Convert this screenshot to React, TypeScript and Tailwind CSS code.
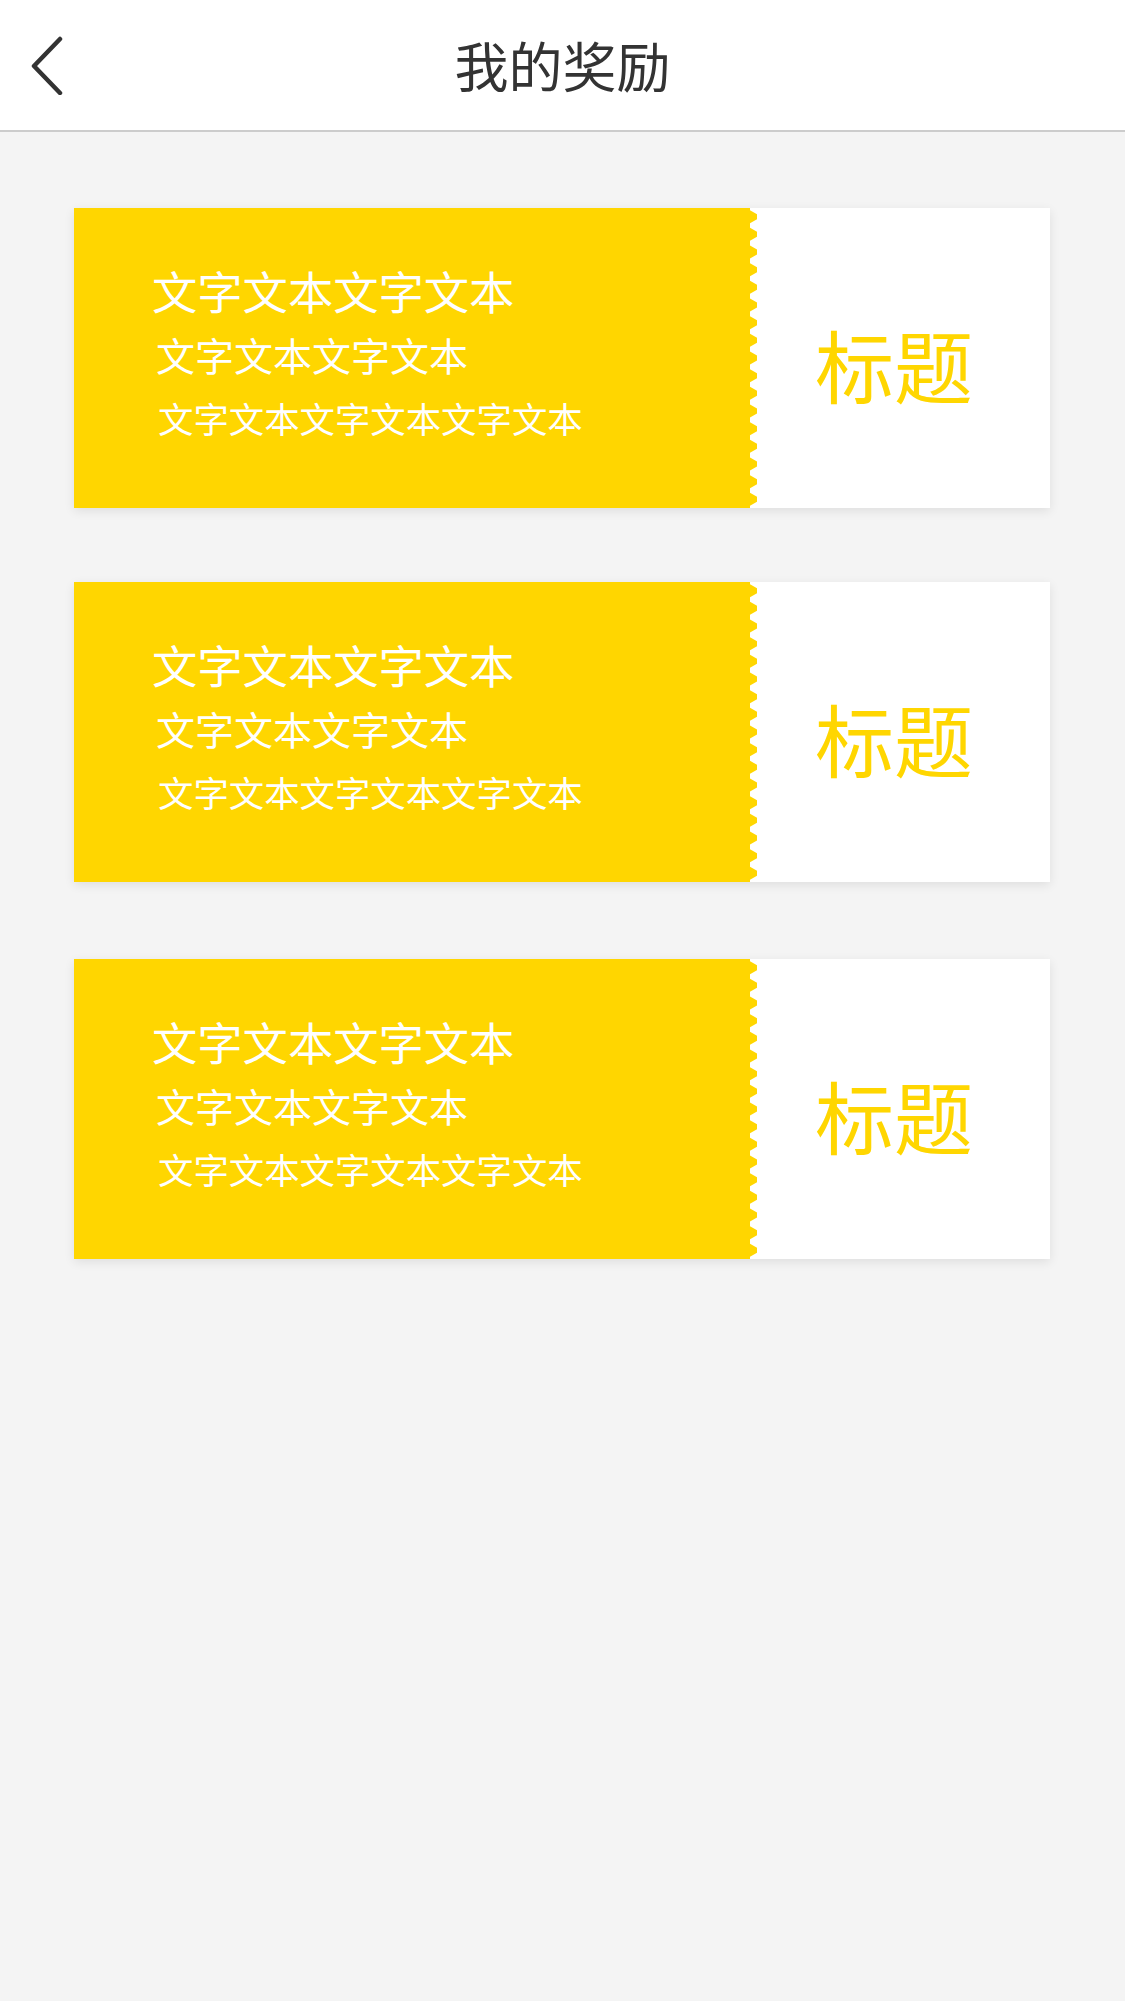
import React from "react";

const cards = [
  { id: 1, lines: ["文字文本文字文本", "文字文本文字文本", "文字文本文字文本文字文本"], title: "标题", gap: "mt-0" },
  { id: 2, lines: ["文字文本文字文本", "文字文本文字文本", "文字文本文字文本文字文本"], title: "标题", gap: "mt-[74px]" },
  { id: 3, lines: ["文字文本文字文本", "文字文本文字文本", "文字文本文字文本文字文本"], title: "标题", gap: "mt-[77px]" },
];

const font = "font-['Noto_Sans_CJK_SC','Noto_Sans',sans-serif]";

// serrated edge between the yellow stub and the white part
function Teeth() {
  const teeth = Array.from({ length: 17 }, (_, i) => 8.7 + i * (300 - 17.4) / 16);
  return (
    <svg className="absolute top-0 left-full h-[300px] w-[8px]" viewBox="0 0 8 300" preserveAspectRatio="none">
      {teeth.map((c, i) => (
        <polygon key={i} points={`0,${c - 6.5} 7,${c - 2.5} 7,${c + 2.5} 0,${c + 6.5}`} fill="#FFD600" />
      ))}
    </svg>
  );
}

function RewardCard({ lines, title, gap }: { lines: string[]; title: string; gap: string }) {
  return (
    <div className={`${gap} flex h-[300px] bg-white shadow-[0_3px_10px_rgba(0,0,0,0.09)]`}>
      <div className="relative w-[676px] bg-[#FFD600] flex flex-col justify-center pl-[78px] pb-[8px] text-white">
        <p className="h-[64px] leading-[64px] text-[45.3px]">{lines[0]}</p>
        <p className="h-[64px] leading-[64px] text-[39px] ml-[4px]">{lines[1]}</p>
        <p className="h-[64px] leading-[64px] text-[35.4px] ml-[6px]">{lines[2]}</p>
        <Teeth />
      </div>
      <div className="flex-1 flex items-center justify-center pt-[10px] pr-[12px]">
        <span className="text-[79px] leading-none text-[#FFD600]">{title}</span>
      </div>
    </div>
  );
}

export default function App() {
  return (
    <div className={`min-h-[2001px] w-[1125px] bg-[#F4F4F4] ${font}`}>
      <header className="relative h-[132px] bg-white border-b-2 border-[#cccccc] flex items-center justify-center">
        <button className="absolute left-[28px] top-[34px] w-[40px] h-[62px] flex items-center justify-center">
          <svg width="36" height="60" viewBox="0 0 36 60" fill="none">
            <path d="M30 4 L4 31 L30 58" stroke="#333333" strokeWidth="4.5" strokeLinecap="round" strokeLinejoin="round" />
          </svg>
        </button>
        <h1 className="text-[54px] text-[#333333] font-normal leading-none">我的奖励</h1>
      </header>

      <main className="flex flex-col px-[74px] pt-[76px] pr-[75px]">
        {cards.map((c) => (
          <RewardCard key={c.id} lines={c.lines} title={c.title} gap={c.gap} />
        ))}
      </main>
    </div>
  );
}
